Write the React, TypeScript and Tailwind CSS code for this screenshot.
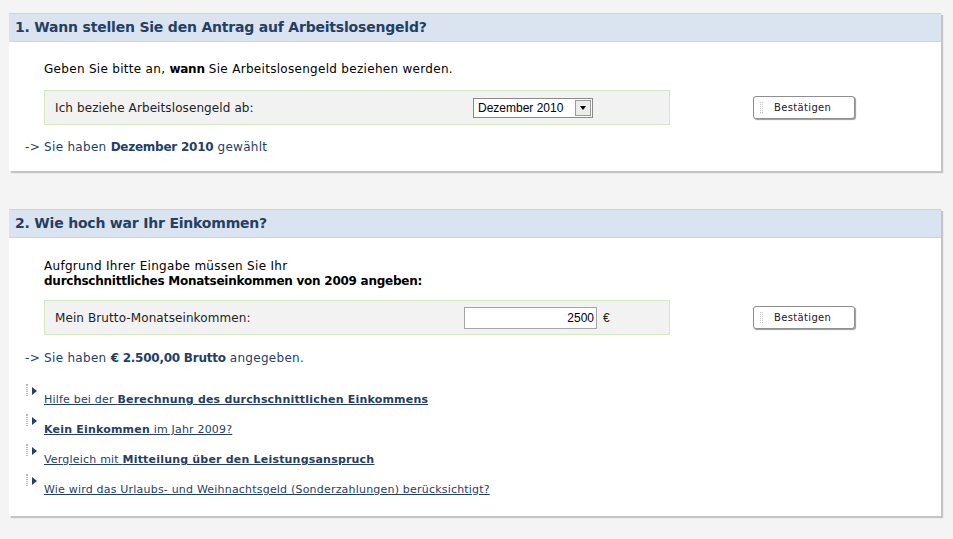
import React from "react";

const font = { fontFamily: '"DejaVu Sans", Verdana, sans-serif' };
const arial = { fontFamily: '"Liberation Sans", Arial, sans-serif' };

function B({ children }: { children: React.ReactNode }) {
  return <b className="tracking-[-0.25px]">{children}</b>;
}

function ConfirmButton() {
  return (
    <button
      type="button"
      className="flex h-[23px] w-[102px] items-center rounded-[3px] border border-[#8f8f8f] bg-white pl-[6px] text-[10px] tracking-[0.35px] text-[#222] shadow-[1px_1px_1px_#9a9a9a]"
    >
      <span className="mr-[11px] h-[11px] w-[3px] border-x border-dotted border-[#c4c4c4]" />
      Bestätigen
    </button>
  );
}

function Panel({ title, children }: { title: string; children: React.ReactNode }) {
  return (
    <section className="ml-[9px] w-[932px] bg-white shadow-[2px_2px_1px_#c4c4c4]">
      <h2 className="h-[29px] border-y border-[#c5d5e6] bg-[#dae4f0] pl-[6px] pt-[5px] text-[14px] font-bold leading-[17px] tracking-[-0.2px] text-[#243f63]">
        {title}
      </h2>
      {children}
    </section>
  );
}

function LinkRow({ children }: { children: React.ReactNode }) {
  return (
    <li className="flex h-[30px] items-start">
      <span className="relative ml-[17px] h-[12px] w-[18px]">
        <span className="absolute left-0 top-0 h-[12px] w-[2px] border-x border-dotted border-[#b9b9b9]" />
        <span className="absolute left-[6px] top-[3px] h-0 w-0 border-y-[4px] border-l-[5px] border-y-transparent border-l-[#243f63]" />
      </span>
      <a href="#" className="mt-[9px] text-[11px] leading-[14px] tracking-[0.2px] text-[#243f63] underline">
        {children}
      </a>
    </li>
  );
}

function LB({ children }: { children: React.ReactNode }) {
  return <b className="tracking-[0.2px]">{children}</b>;
}

export default function App() {
  return (
    <div className="min-h-[539px] w-[953px] bg-[#f4f4f4] pt-[13px]" style={font}>
      <Panel title="1. Wann stellen Sie den Antrag auf Arbeitslosengeld?">
        <div className="pb-[16px] pt-[19px]">
          <p className="ml-[35px] text-[12px] leading-[16px] tracking-[0.3px] text-black">
            Geben Sie bitte an, <B>wann</B> Sie Arbeitslosengeld beziehen werden.
          </p>
          <div className="mt-[13px] flex items-center">
            <div className="ml-[35px] flex h-[35px] w-[626px] items-center border border-[#d4e9c2] bg-[#f2f2f2] pl-[10px]">
              <span className="w-[418px] text-[12px] tracking-[0.1px] text-[#222]">Ich beziehe Arbeitslosengeld ab:</span>
              <div
                className="flex h-[20px] w-[120px] items-center border border-[#8a8a8a] bg-white pl-[4px] text-[12px] text-black"
                style={arial}
              >
                <span className="flex-1">Dezember 2010</span>
                <span className="mr-[1px] flex h-[16px] w-[16px] items-center justify-center border border-[#9a9a9a] bg-[#ececec]">
                  <span className="h-0 w-0 border-x-[3px] border-t-[4px] border-x-transparent border-t-black" />
                </span>
              </div>
            </div>
            <div className="ml-[83px]">
              <ConfirmButton />
            </div>
          </div>
          <p className="ml-[16px] mt-[14px] text-[12px] leading-[16px] tracking-[0.3px] text-[#243f63]">
            -&gt; Sie haben <B>Dezember 2010</B> gewählt
          </p>
        </div>
      </Panel>

      <div className="h-[38px]" />

      <Panel title="2. Wie hoch war Ihr Einkommen?">
        <div className="pb-[12px] pt-[21px]">
          <p className="ml-[35px] text-[12px] leading-[15px] tracking-[0.3px] text-black">
            Aufgrund Ihrer Eingabe müssen Sie Ihr
            <br />
            <B>durchschnittliches Monatseinkommen von 2009 angeben:</B>
          </p>
          <div className="mt-[11px] flex items-center">
            <div className="ml-[35px] flex h-[35px] w-[626px] items-center border border-[#d4e9c2] bg-[#f2f2f2] pl-[10px]">
              <span className="w-[409px] text-[12px] tracking-[0.1px] text-[#222]">Mein Brutto-Monatseinkommen:</span>
              <div
                className="flex h-[22px] w-[133px] items-center justify-end border border-[#a5a5a5] bg-white pr-[2px] text-[12px] text-black"
                style={arial}
              >
                2500
              </div>
              <span className="ml-[6px] text-[12px] text-[#222]" style={arial}>
                €
              </span>
            </div>
            <div className="ml-[83px]">
              <ConfirmButton />
            </div>
          </div>
          <p className="ml-[16px] mt-[15px] text-[12px] leading-[16px] tracking-[0.3px] text-[#243f63]">
            -&gt; Sie haben <B>€ 2.500,00 Brutto</B> angegeben.
          </p>
          <ul className="mt-[18px]">
            <LinkRow>
              Hilfe bei der <LB>Berechnung des durchschnittlichen Einkommens</LB>
            </LinkRow>
            <LinkRow>
              <LB>Kein Einkommen</LB> im Jahr 2009?
            </LinkRow>
            <LinkRow>
              Vergleich mit <LB>Mitteilung über den Leistungsanspruch</LB>
            </LinkRow>
            <LinkRow>Wie wird das Urlaubs- und Weihnachtsgeld (Sonderzahlungen) berücksichtigt?</LinkRow>
          </ul>
        </div>
      </Panel>
    </div>
  );
}
